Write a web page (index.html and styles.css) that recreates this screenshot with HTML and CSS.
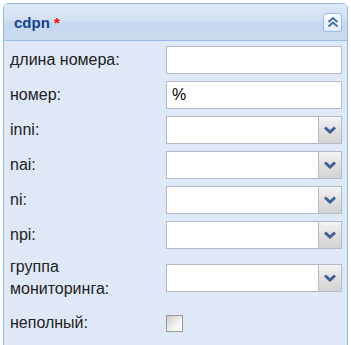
FILE: index.html
```html
<!DOCTYPE html>
<html lang="ru">
<head>
    <meta charset="UTF-8">
    <title>cdpn</title>
    <link rel="stylesheet" href="styles.css">
</head>
<body>
    <div class="panel">
        <div class="panel-header">
            <span class="title">cdpn <span class="req">*</span></span>
            <span class="tool">
                <svg width="12" height="12" viewBox="0 0 12 12">
                    <path d="M1.5 6 L6 2 L10.5 6 M1.5 10.5 L6 6.5 L10.5 10.5" fill="none" stroke="#4a6fa8" stroke-width="2"/>
                </svg>
            </span>
        </div>
        <div class="panel-body">
            <div class="row">
                <label>длина номера:</label>
                <div class="field"><input type="text"></div>
            </div>
            <div class="row">
                <label>номер:</label>
                <div class="field"><input type="text" value="%"></div>
            </div>
            <div class="row">
                <label>inni:</label>
                <div class="field combo"><input type="text"><span class="trigger"><svg width="12" height="8" viewBox="0 0 12 8"><path d="M1 1.5 L6 6 L11 1.5" fill="none" stroke="#3f5f98" stroke-width="3"/></svg></span></div>
            </div>
            <div class="row">
                <label>nai:</label>
                <div class="field combo"><input type="text"><span class="trigger"><svg width="12" height="8" viewBox="0 0 12 8"><path d="M1 1.5 L6 6 L11 1.5" fill="none" stroke="#3f5f98" stroke-width="3"/></svg></span></div>
            </div>
            <div class="row">
                <label>ni:</label>
                <div class="field combo"><input type="text"><span class="trigger"><svg width="12" height="8" viewBox="0 0 12 8"><path d="M1 1.5 L6 6 L11 1.5" fill="none" stroke="#3f5f98" stroke-width="3"/></svg></span></div>
            </div>
            <div class="row">
                <label>npi:</label>
                <div class="field combo"><input type="text"><span class="trigger"><svg width="12" height="8" viewBox="0 0 12 8"><path d="M1 1.5 L6 6 L11 1.5" fill="none" stroke="#3f5f98" stroke-width="3"/></svg></span></div>
            </div>
            <div class="row">
                <label>группа<br>мониторинга:</label>
                <div class="field combo"><input type="text"><span class="trigger"><svg width="12" height="8" viewBox="0 0 12 8"><path d="M1 1.5 L6 6 L11 1.5" fill="none" stroke="#3f5f98" stroke-width="3"/></svg></span></div>
            </div>
            <div class="row last">
                <label>неполный:</label>
                <div class="field"><span class="check"></span></div>
            </div>
        </div>
    </div>
</body>
</html>
```

FILE: styles.css
```css
body {
    margin: 0;
    background-color: #ffffff;
    font-family: 'Liberation Sans', Arial, sans-serif;
    overflow: hidden;
}
.panel {
    margin: 3px 0 0 3px;
    width: 345px;
    border: 1px solid #99bbe8;
    border-radius: 5px 5px 0 0;
    background-color: #dfe8f6;
    box-sizing: border-box;
    height: 360px;
}
.panel-header {
    display: flex;
    align-items: center;
    justify-content: space-between;
    height: 36px;
    padding: 0 5px 0 10px;
    border-bottom: 1px solid #99bbe8;
    border-radius: 4px 4px 0 0;
    background: linear-gradient(#dfe9f6, #d2e0f2 45%, #c4d6ee 55%, #cbdcf1);
}
.title {
    font-size: 15px;
    font-weight: bold;
    color: #15428b;
}
.req {
    color: #ff0000;
}
.tool {
    display: flex;
    align-items: center;
    justify-content: center;
    width: 17px;
    height: 17px;
    border: 1px solid #99bbe8;
    border-radius: 3px;
    background: linear-gradient(#fbfdff, #e3ecf8);
}
.panel-body {
    padding: 5px 5px 0 6px;
}
.row {
    display: flex;
    align-items: center;
    margin-bottom: 7px;
}
.row.last {
    margin-top: 9px;
}
label {
    width: 156px;
    font-size: 16px;
    line-height: 22px;
    color: #222222;
}
.field {
    display: flex;
    width: 176px;
    min-height: 28px;
    align-items: center;
}
input {
    box-sizing: border-box;
    width: 176px;
    height: 28px;
    margin: 0;
    padding: 2px 5px;
    border: 1px solid #b5b8c8;
    background-color: #ffffff;
    font-family: inherit;
    font-size: 16px;
    color: #000000;
    outline: none;
}
.combo input {
    width: 152px;
    border-right: none;
}
.trigger {
    box-sizing: border-box;
    display: flex;
    align-items: center;
    justify-content: center;
    width: 24px;
    height: 28px;
    border: 1px solid #b5b8c8;
    background: linear-gradient(#f4f4f4, #e0e0e0 50%, #d3d3d3);
}
.check {
    box-sizing: border-box;
    width: 17px;
    height: 17px;
    border: 1px solid #999999;
    background: linear-gradient(135deg, #cccccc, #f4f4f4 60%, #ffffff);
}
```
